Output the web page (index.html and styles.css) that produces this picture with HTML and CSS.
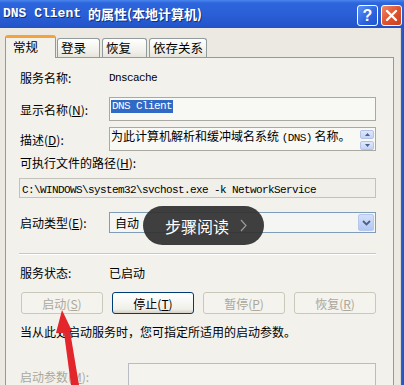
FILE: index.html
```html
<!DOCTYPE html>
<html lang="zh-CN">
<head>
<meta charset="utf-8">
<link rel="stylesheet" href="styles.css">
</head>
<body>
<div class="window">
  <div class="titlebar">
    <div class="title"><span class="tmono">DNS Client</span><span class="tcjk">的属性(本地计算机)</span></div>
    <div class="tbtns">
      <span class="tb help">?</span>
      <span class="tb close"><svg width="13" height="13" viewBox="0 0 13 13"><path d="M2 2 L11 11 M11 2 L2 11" stroke="#fff" stroke-width="2.4" stroke-linecap="round"/></svg></span>
    </div>
  </div>
  <div class="main">
    <div class="body">
      <div class="tabs">
        <div class="tab active">常规</div>
        <div class="tab t2">登录</div>
        <div class="tab t3">恢复</div>
        <div class="tab t4">依存关系</div>
      </div>
      <div class="panel">
        <div class="row r1"><span class="lbl">服务名称:</span><span class="m">Dnscache</span></div>
        <div class="row r2"><span class="lbl">显示名称(<u>N</u>):</span>
          <div class="box dbox"><span class="sel m">DNS Client</span></div>
        </div>
        <div class="row r3"><span class="lbl">描述(<u>D</u>):</span>
          <div class="box descbox">
            <span class="desc">为此计算机解析和缓冲域名系统 <span class="m">(DNS)</span> 名称。</span>
            <div class="scroll">
              <span class="sb"><svg width="5" height="3" viewBox="0 0 5 3"><path d="M0 3 L2.5 0 L5 3Z" fill="#4a5f8c"/></svg></span>
              <span class="sb"><svg width="5" height="3" viewBox="0 0 5 3"><path d="M0 0 L2.5 3 L5 0Z" fill="#4a5f8c"/></svg></span>
            </div>
          </div>
        </div>
        <div class="r4">可执行文件的路径(<u>H</u>):</div>
        <div class="box pathbox"><span class="m">C:\WINDOWS\system32\svchost.exe -k NetworkService</span></div>
        <div class="row r6"><span class="lbl">启动类型(<u>E</u>):</span>
          <div class="combo"><span class="cval">自动</span><span class="cbtn"><svg width="9" height="6" viewBox="0 0 9 6"><path d="M1 1 L4.5 4.5 L8 1" fill="none" stroke="#4d6185" stroke-width="1.8"/></svg></span></div>
        </div>
        <div class="sep"></div>
        <div class="row r7"><span class="lbl">服务状态:</span><span>已启动</span></div>
        <div class="btns">
          <span class="btn dis">启动(<u>S</u>)</span>
          <span class="btn on">停止(<u>T</u>)</span>
          <span class="btn dis">暂停(<u>P</u>)</span>
          <span class="btn dis">恢复(<u>R</u>)</span>
        </div>
        <div class="r9">当从此处启动服务时，您可指定所适用的启动参数。</div>
        <div class="row r10"><span class="lbl2">启动参数(<u>M</u>):</span><div class="box pbox"></div></div>
      </div>
    </div>
    <div class="rframe"></div>
  </div>
  <div class="pill"><span>步骤阅读</span><svg width="7" height="13" viewBox="0 0 7 13"><path d="M1 1 L6 6.5 L1 12" fill="none" stroke="#9a9a9a" stroke-width="1.2"/></svg></div>
  <svg class="arrow" width="35" height="80" viewBox="0 0 35 80"><path d="M12 5 L22 26 L20 26 L29 80 L21 80 L14 28 L6 28 Z" fill="#e3262b"/></svg>
</div>
</body>
</html>
```
FILE: styles.css
```css
html, body { margin: 0; padding: 0; }
body { background: #ebe9e1; font-family: "Noto Sans CJK SC", "Liberation Sans", sans-serif; font-size: 12px; color: #000; }
.window { width: 404px; height: 385px; overflow: hidden; position: relative; background: #ebe9e1; }
.titlebar { height: 28px; display: flex; align-items: center; justify-content: space-between; padding: 0 2px 0 3px; box-sizing: border-box;
  background: linear-gradient(#4b86ee 0, #2d65dc 3px, #2a5fd7 14px, #2457cd 24px, #2152c4 28px); }
.title { color: #fff; font-weight: bold; text-shadow: 1px 1px 0 #10307a; white-space: nowrap; display: flex; align-items: center; gap: 7px; line-height: 16px; }
.tmono { font-family: "Liberation Mono", monospace; font-size: 13px; font-weight: bold; }
.tcjk { font-family: "Noto Sans CJK SC", sans-serif; font-size: 13px; font-weight: bold; }
.tbtns { display: flex; gap: 3px; align-self: flex-start; margin-top: 5px; }
.tb { width: 19px; height: 19px; border: 1px solid #fff; border-radius: 3px; display: flex; align-items: center; justify-content: center; color: #fff; }
.help { background: linear-gradient(135deg, #5c94f5, #2b62de 60%, #2356cc); font-family: "Liberation Sans", sans-serif; font-weight: bold; font-size: 16px; line-height: 1; }
.close { background: linear-gradient(135deg, #ee8a6c, #e0532e 50%, #c8401e); }
.main { display: flex; height: 357px; }
.body { width: 400px; padding: 7px 0 0 5px; box-sizing: border-box; overflow: hidden; }
.rframe { width: 4px; background: linear-gradient(90deg, #d8d6cf 0, #d8d6cf 1px, #2f63d8 1px, #1f4fc0); }
.tabs { display: flex; align-items: flex-end; height: 22px; }
.tab { box-sizing: border-box; height: 19px; border: 1px solid #919b9c; border-bottom: none; border-radius: 3px 3px 0 0; background: linear-gradient(#ffffff, #f0efe9 70%, #e6e4dc); padding-left: 3px; line-height: 17px; font-size: 12.5px; margin-left: 2px; }
.tab.active { height: 23px; width: 51px; margin-left: 0; margin-bottom: -1px; position: relative; z-index: 1; background: #f2f1ec; border-top: 3px solid #f3a33a; padding-left: 7px; line-height: 17px; }
.t2 { width: 43px; margin-left: 1px; }
.t3 { width: 45px; }
.t4 { width: 58px; }
.panel { width: 389px; height: 340px; box-sizing: border-box; border: 1px solid #919b9c; background: #f2f1ec; padding: 0 17px 0 14px; }
.row { display: flex; align-items: center; }
.lbl { width: 89px; flex: none; white-space: nowrap; }
.lbl2 { width: 108px; flex: none; white-space: nowrap; color: #aca899; }
.m { font-family: "Liberation Mono", monospace; font-size: 11px; letter-spacing: -0.6px; }
.r1 { margin-top: 12px; height: 16px; line-height: 16px; }
.box { box-sizing: border-box; border: 1px solid #a9a8a1; background: #f8f8f5; }
.r2 { margin-top: 11px; }
.dbox { flex: 1; height: 24px; padding: 0 0 0 1px; line-height: 12px; }
.sel { display: inline-block; background: #316ac5; color: #fff; padding: 0 1px; line-height: 13px; }
.r3 { margin-top: 6px; }
.descbox { flex: 1; height: 24px; display: flex; padding: 0 1px; }
.desc { flex: 1; line-height: 16px; white-space: nowrap; }
.scroll { display: flex; flex-direction: column; gap: 2px; width: 14px; padding-top: 2px; }
.sb { height: 8px; border: 1px solid #b4c4e8; border-radius: 2px; background: linear-gradient(#dfe8fb, #c3d3f6); display: flex; align-items: center; justify-content: center; }
.r4 { margin-top: 4px; height: 16px; line-height: 16px; }
.pathbox { margin: 7px 0 0 -1px; height: 20px; line-height: 18px; padding-left: 2px; background: #f0efea; border-color: #c2c1ba; }
.r6 { margin-top: 14px; }
.combo { flex: 1; height: 21px; box-sizing: border-box; border: 1px solid #7f9db9; background: #f5f5f3; display: flex; align-items: stretch; padding: 1px; }
.cval { flex: 1; padding-left: 4px; line-height: 17px; }
.cbtn { width: 14px; border-radius: 2px; background: linear-gradient(#d4e0fa, #b2c7f2); border: 1px solid #b6c8ee; display: flex; align-items: center; justify-content: center; }
.sep { margin-top: 20px; height: 0; border-top: 1px solid #c9c7bf; border-bottom: 1px solid #ffffff; margin-left: -1px; }
.r7 { margin-top: 10px; height: 16px; line-height: 16px; }
.btns { margin-top: 11px; display: flex; justify-content: space-between; padding-left: 1px; }
.btn { width: 82px; height: 22px; box-sizing: border-box; border-radius: 3px; display: flex; align-items: center; justify-content: center; }
.btn.dis { border: 1px solid #cac8bb; color: #aca899; background: #f4f3ee; }
.btn.on { border: 1px solid #003c74; background: linear-gradient(#ffffff, #f0f0ea 80%, #d6d0c5); }
.r9 { margin-top: 10px; height: 16px; line-height: 16px; white-space: nowrap; }
.r10 { margin-top: 23px; }
.pbox { flex: 1; height: 26px; background: #f4f3ee; border-color: #b8bcc4; }
.pill { position: absolute; left: 143px; top: 206px; width: 121px; height: 39px; border-radius: 20px; background: rgba(48, 48, 48, 0.93); box-sizing: border-box; padding-left: 22px; display: flex; align-items: center; gap: 11px; color: #fff; font-size: 16px; }
.arrow { position: absolute; left: 50px; top: 305px; }
```
